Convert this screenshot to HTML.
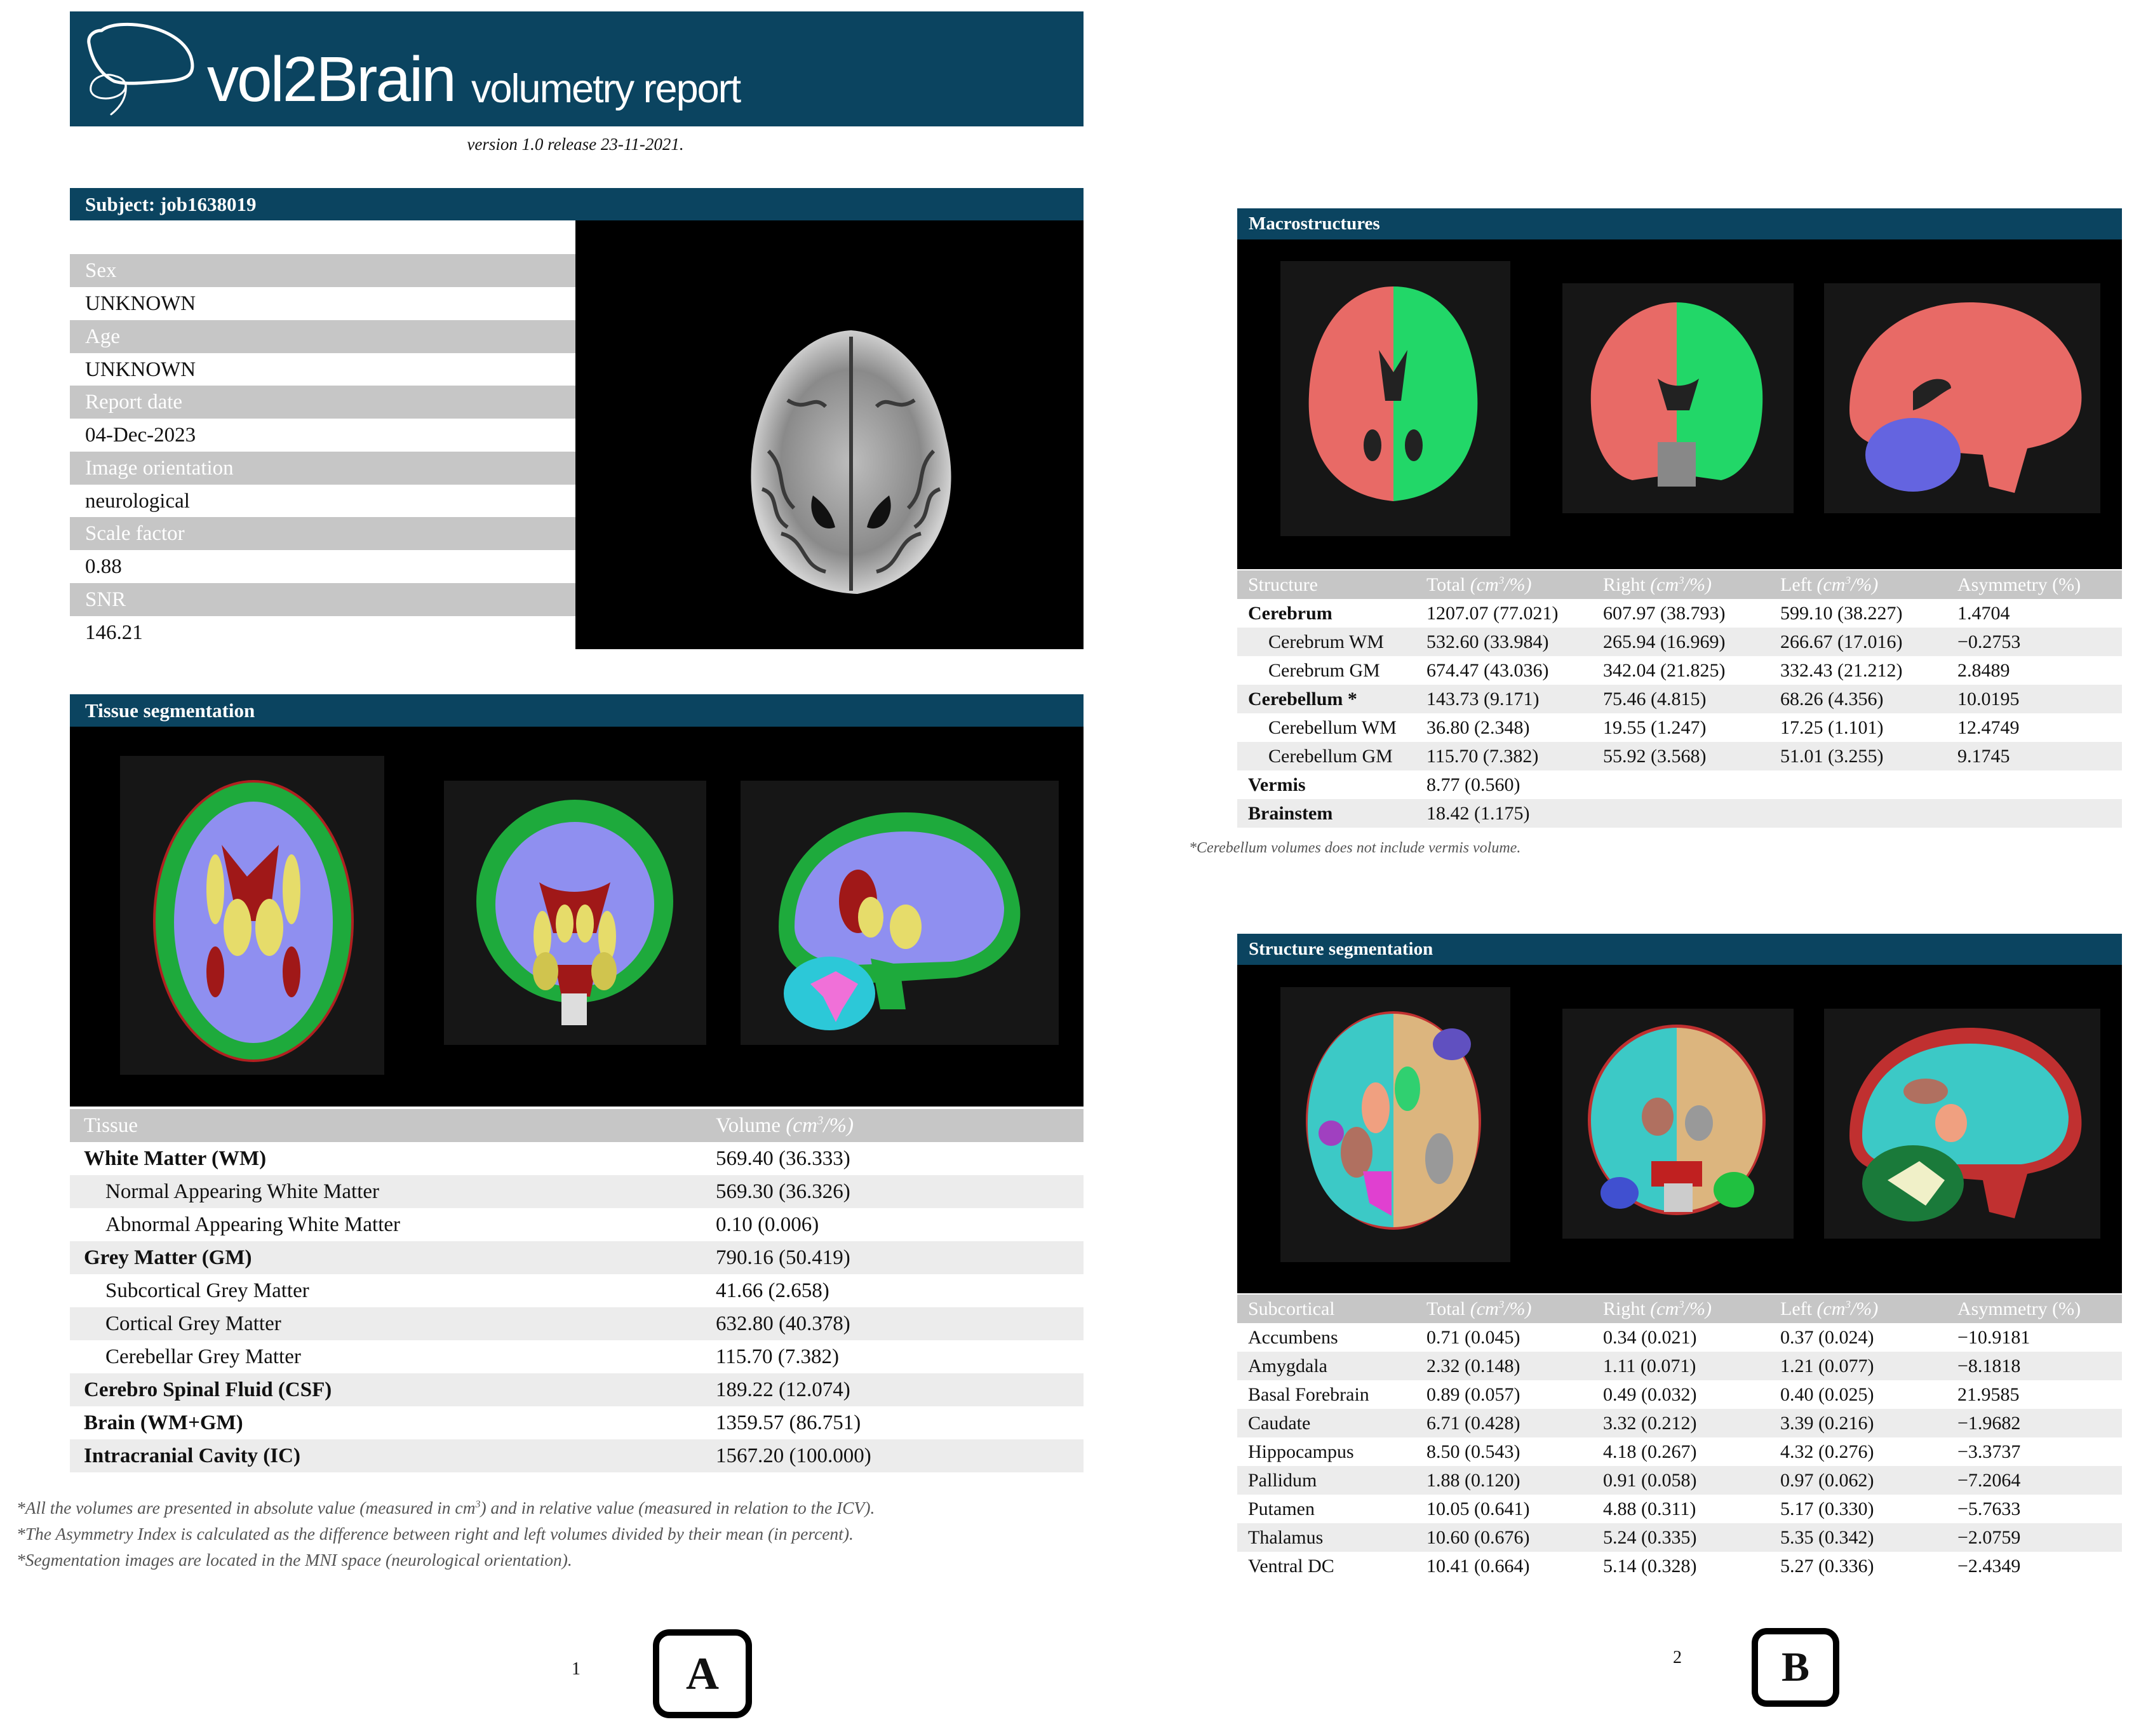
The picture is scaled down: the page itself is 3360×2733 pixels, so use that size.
<!DOCTYPE html>
<html><head><meta charset="utf-8">
<style>
*{margin:0;padding:0;box-sizing:border-box}
body{width:3360px;height:2733px;background:#fff;position:relative;overflow:hidden;font-family:"Liberation Serif",serif;color:#111}
.a{position:absolute}
.bar{position:absolute;background:#0b4460;color:#fff;font-weight:bold;font-size:31px;padding-left:24px;display:flex;align-items:center}
.blk{position:absolute;background:#000}
.pnl{position:absolute;background:#161616}
.row{position:absolute;height:52px;font-size:33px;display:flex;align-items:center}
.g{background:#ececec}
.h{background:#c6c6c6;color:#fff}
.c{position:absolute}
.r2{position:absolute;height:45px;font-size:30px;display:flex;align-items:center;left:1948px;width:1393px}
.r2 span{position:absolute}
</style></head><body>

<div class="a" style="left:110px;top:18px;width:1596px;height:181px;background:#0b4460"></div>
<svg class="a" style="left:110px;top:18px" width="300" height="181" viewBox="0 0 300 181">
<g fill="none" stroke="#fff" stroke-linecap="round">
<path d="M50 30 C 75 10, 170 20, 190 70 C 200 100, 185 108, 150 110 C 120 112, 90 116, 70 110 C 50 100, 35 80, 30 50 C 28 38, 38 30, 50 30" stroke-width="5"/>
<path d="M72 102 C 55 95, 30 105, 33 125 C 38 142, 75 140, 85 125 C 92 115, 85 105, 72 102" stroke-width="3"/>
<path d="M88 115 C 90 135, 80 150, 65 162" stroke-width="3"/>
</g></svg>
<div class="a" style="left:326px;top:68px;font-family:'Liberation Sans',sans-serif;font-size:100px;color:#fff;letter-spacing:-3px">vol2Brain</div>
<div class="a" style="left:742px;top:104px;font-family:'Liberation Sans',sans-serif;font-size:63px;color:#fff;letter-spacing:-2px">volumetry report</div>
<div class="a" style="left:0;width:1812px;top:212px;text-align:center;font-style:italic;font-size:27px">version 1.0 release 23-11-2021.</div>

<div class="bar" style="left:110px;top:296px;width:1596px;height:51px">Subject: job1638019</div>
<div class="row h" style="left:110px;top:400px;width:796px;padding-left:24px">Sex</div>
<div class="row" style="left:110px;top:452px;width:796px;padding-left:24px">UNKNOWN</div>
<div class="row h" style="left:110px;top:504px;width:796px;padding-left:24px">Age</div>
<div class="row" style="left:110px;top:556px;width:796px;padding-left:24px">UNKNOWN</div>
<div class="row h" style="left:110px;top:607px;width:796px;padding-left:24px">Report date</div>
<div class="row" style="left:110px;top:659px;width:796px;padding-left:24px">04-Dec-2023</div>
<div class="row h" style="left:110px;top:711px;width:796px;padding-left:24px">Image orientation</div>
<div class="row" style="left:110px;top:763px;width:796px;padding-left:24px">neurological</div>
<div class="row h" style="left:110px;top:814px;width:796px;padding-left:24px">Scale factor</div>
<div class="row" style="left:110px;top:866px;width:796px;padding-left:24px">0.88</div>
<div class="row h" style="left:110px;top:918px;width:796px;padding-left:24px">SNR</div>
<div class="row" style="left:110px;top:970px;width:796px;padding-left:24px">146.21</div>
<div class="blk" style="left:906px;top:347px;width:800px;height:675px"></div>
<svg class="a" style="left:1150px;top:510px" width="380" height="440" viewBox="0 0 380 440">
<defs><radialGradient id="gb" cx="50%" cy="50%" r="50%"><stop offset="0" stop-color="#bdbdbd"/><stop offset="0.7" stop-color="#8a8a8a"/><stop offset="1" stop-color="#d0d0d0"/></radialGradient></defs>
<path d="M190 10 C 260 15, 320 80, 340 180 C 365 280, 330 400, 200 425 C 70 420, 20 320, 35 200 C 50 90, 110 15, 190 10Z" fill="url(#gb)"/>
<g stroke="#3a3a3a" stroke-width="6" fill="none">
<path d="M190 20 L190 420"/><path d="M60 200 C 90 230, 70 260, 100 290"/><path d="M320 200 C 290 230, 310 260, 280 290"/>
<path d="M80 330 C 120 340, 110 380, 150 390"/><path d="M300 330 C 260 340, 270 380, 230 390"/>
<path d="M90 120 C 120 140, 130 110, 150 130"/><path d="M290 120 C 260 140, 250 110, 230 130"/>
<path d="M50 260 C 80 270, 60 300, 90 320"/><path d="M330 260 C 300 270, 320 300, 290 320"/>
</g>
<path d="M130 270 C 120 300, 140 330, 165 320 C 160 300, 150 285, 130 270Z M250 270 C 260 300, 240 330, 215 320 C 220 300, 230 285, 250 270Z" fill="#111"/>
</svg>

<div class="bar" style="left:110px;top:1093px;width:1596px;height:51px">Tissue segmentation</div>
<div class="blk" style="left:110px;top:1144px;width:1596px;height:598px"></div>
<div class="pnl" style="left:189px;top:1190px;width:416px;height:502px"></div>
<div class="pnl" style="left:699px;top:1229px;width:413px;height:416px"></div>
<div class="pnl" style="left:1166px;top:1229px;width:501px;height:416px"></div>
<svg class="a" style="left:189px;top:1190px" width="416" height="502">
<ellipse cx="210" cy="260" rx="158" ry="222" fill="#b02020"/>
<ellipse cx="210" cy="260" rx="154" ry="218" fill="#1eaa3c"/>
<ellipse cx="210" cy="262" rx="125" ry="190" fill="#8f8ff0"/>
<path d="M160 140 L200 190 L250 140 L235 260 L185 260Z" fill="#a01818"/>
<ellipse cx="150" cy="210" rx="14" ry="55" fill="#e6dc6a"/><ellipse cx="270" cy="210" rx="14" ry="55" fill="#e6dc6a"/>
<ellipse cx="185" cy="270" rx="22" ry="45" fill="#e6dc6a"/><ellipse cx="235" cy="270" rx="22" ry="45" fill="#e6dc6a"/>
<ellipse cx="150" cy="340" rx="14" ry="40" fill="#a01818"/><ellipse cx="270" cy="340" rx="14" ry="40" fill="#a01818"/>
</svg>
<svg class="a" style="left:699px;top:1229px" width="413" height="416">
<ellipse cx="206" cy="190" rx="155" ry="160" fill="#1eaa3c"/>
<ellipse cx="206" cy="195" rx="125" ry="130" fill="#8f8ff0"/>
<path d="M150 160 C 180 180, 230 180, 262 160 L240 240 L172 240Z" fill="#a01818"/>
<ellipse cx="155" cy="245" rx="14" ry="40" fill="#e6dc6a"/><ellipse cx="257" cy="245" rx="14" ry="40" fill="#e6dc6a"/>
<ellipse cx="190" cy="225" rx="14" ry="30" fill="#e6dc6a"/><ellipse cx="222" cy="225" rx="14" ry="30" fill="#e6dc6a"/>
<path d="M175 290 L240 290 L230 340 L185 340Z" fill="#a01818"/>
<ellipse cx="160" cy="300" rx="20" ry="30" fill="#d0c44e"/><ellipse cx="252" cy="300" rx="20" ry="30" fill="#d0c44e"/>
<rect x="185" y="335" width="40" height="50" fill="#ddd"/>
</svg>
<svg class="a" style="left:1166px;top:1229px" width="501" height="416">
<path d="M60 230 C 60 120, 150 50, 260 50 C 370 50, 430 120, 440 200 C 445 260, 400 300, 340 310 L 180 320 C 120 320, 60 300, 60 230Z" fill="#1eaa3c"/>
<path d="M85 230 C 85 135, 160 80, 260 80 C 360 80, 410 140, 415 200 C 415 250, 380 280, 330 285 L 180 290 C 130 290, 85 270, 85 230Z" fill="#8f8ff0"/>
<ellipse cx="185" cy="190" rx="30" ry="50" fill="#a01818"/>
<ellipse cx="205" cy="215" rx="20" ry="32" fill="#e6dc6a"/><ellipse cx="260" cy="230" rx="25" ry="35" fill="#e6dc6a"/>
<ellipse cx="140" cy="335" rx="72" ry="58" fill="#2cc8d8"/>
<path d="M110 320 L150 300 L185 320 L160 360 L150 380 L130 340Z" fill="#f070d8"/>
<path d="M205 280 L250 290 L260 360 L220 360Z" fill="#1eaa3c"/>
</svg>

<div class="row h" style="left:110px;top:1746px;width:1596px"><span class="c" style="left:22px">Tissue</span><span class="c" style="left:1017px">Volume <i>(cm<sup style="font-size:19px">3</sup>/%)</i></span></div>
<div class="row" style="left:110px;top:1798px;width:1596px;font-weight:bold"><span class="c" style="left:22px">White Matter (WM)</span><span class="c" style="left:1017px;font-weight:normal">569.40 (36.333)</span></div>
<div class="row g" style="left:110px;top:1850px;width:1596px"><span class="c" style="left:56px">Normal Appearing White Matter</span><span class="c" style="left:1017px">569.30 (36.326)</span></div>
<div class="row" style="left:110px;top:1902px;width:1596px"><span class="c" style="left:56px">Abnormal Appearing White Matter</span><span class="c" style="left:1017px">0.10 (0.006)</span></div>
<div class="row g" style="left:110px;top:1954px;width:1596px;font-weight:bold"><span class="c" style="left:22px">Grey Matter (GM)</span><span class="c" style="left:1017px;font-weight:normal">790.16 (50.419)</span></div>
<div class="row" style="left:110px;top:2006px;width:1596px"><span class="c" style="left:56px">Subcortical Grey Matter</span><span class="c" style="left:1017px">41.66 (2.658)</span></div>
<div class="row g" style="left:110px;top:2058px;width:1596px"><span class="c" style="left:56px">Cortical Grey Matter</span><span class="c" style="left:1017px">632.80 (40.378)</span></div>
<div class="row" style="left:110px;top:2110px;width:1596px"><span class="c" style="left:56px">Cerebellar Grey Matter</span><span class="c" style="left:1017px">115.70 (7.382)</span></div>
<div class="row g" style="left:110px;top:2162px;width:1596px;font-weight:bold"><span class="c" style="left:22px">Cerebro Spinal Fluid (CSF)</span><span class="c" style="left:1017px;font-weight:normal">189.22 (12.074)</span></div>
<div class="row" style="left:110px;top:2214px;width:1596px;font-weight:bold"><span class="c" style="left:22px">Brain (WM+GM)</span><span class="c" style="left:1017px;font-weight:normal">1359.57 (86.751)</span></div>
<div class="row g" style="left:110px;top:2266px;width:1596px;font-weight:bold"><span class="c" style="left:22px">Intracranial Cavity (IC)</span><span class="c" style="left:1017px;font-weight:normal">1567.20 (100.000)</span></div>

<div class="a" style="left:26px;top:2348px;font-style:italic;font-size:27.5px;color:#555;line-height:41px">*All the volumes are presented in absolute value (measured in cm<sup style="font-size:16px">3</sup>) and in relative value (measured in relation to the ICV).<br>*The Asymmetry Index is calculated as the difference between right and left volumes divided by their mean (in percent).<br>*Segmentation images are located in the MNI space (neurological orientation).</div>

<div class="a" style="left:900px;top:2612px;font-size:28px">1</div>
<div class="a" style="left:1028px;top:2565px;width:156px;height:140px;border:10px solid #000;border-radius:26px;display:flex;align-items:center;justify-content:center;font-size:72px;font-weight:bold">A</div>

<div class="bar" style="left:1948px;top:328px;width:1393px;height:49px;font-size:29px;padding-left:18px">Macrostructures</div>
<div class="blk" style="left:1948px;top:377px;width:1393px;height:519px"></div>
<div class="pnl" style="left:2016px;top:411px;width:362px;height:433px"></div>
<div class="pnl" style="left:2460px;top:446px;width:364px;height:362px"></div>
<div class="pnl" style="left:2872px;top:446px;width:435px;height:362px"></div>
<svg class="a" style="left:2016px;top:411px" width="362" height="433">
<path d="M178 40 C 110 40, 50 100, 45 210 C 40 310, 90 370, 178 378Z" fill="#e86a66"/>
<path d="M178 40 C 250 40, 305 100, 310 210 C 315 310, 265 370, 178 378Z" fill="#22d768"/>
<path d="M155 140 L178 175 L200 140 L190 220 L165 220Z" fill="#222"/>
<ellipse cx="145" cy="290" rx="14" ry="25" fill="#222"/><ellipse cx="210" cy="290" rx="14" ry="25" fill="#222"/>
</svg>
<svg class="a" style="left:2460px;top:446px" width="364" height="362">
<path d="M180 30 C 120 30, 50 80, 45 170 C 42 250, 70 300, 110 310 L180 300Z" fill="#e86a66"/>
<path d="M180 30 C 240 30, 310 80, 315 170 C 318 250, 290 300, 250 310 L180 300Z" fill="#22d768"/>
<path d="M150 150 C 170 165, 195 165, 215 150 L200 200 L165 200Z" fill="#222"/>
<rect x="150" y="250" width="60" height="70" fill="#888"/>
</svg>
<svg class="a" style="left:2872px;top:446px" width="435" height="362">
<path d="M40 200 C 40 100, 120 30, 230 30 C 340 30, 400 100, 405 170 C 410 230, 370 250, 320 260 L 300 330 L 260 320 L 250 270 L 120 260 C 70 260, 40 240, 40 200Z" fill="#e86a66"/>
<ellipse cx="140" cy="270" rx="75" ry="58" fill="#6464e0"/>
<path d="M140 170 C 170 140, 200 150, 200 165 C 180 175, 160 195, 140 200Z" fill="#222"/>
</svg>

<div class="r2 h" style="top:898px"><span style="left:17px">Structure</span><span style="left:298px">Total <i>(cm<sup style="font-size:17px">3</sup>/%)</i></span><span style="left:576px">Right <i>(cm<sup style="font-size:17px">3</sup>/%)</i></span><span style="left:855px">Left <i>(cm<sup style="font-size:17px">3</sup>/%)</i></span><span style="left:1134px">Asymmetry (%)</span></div>
<div class="r2" style="top:943px"><span style="left:17px;font-weight:bold">Cerebrum</span><span style="left:298px">1207.07 (77.021)</span><span style="left:576px">607.97 (38.793)</span><span style="left:855px">599.10 (38.227)</span><span style="left:1134px">1.4704</span></div>
<div class="r2 g" style="top:988px"><span style="left:49px">Cerebrum WM</span><span style="left:298px">532.60 (33.984)</span><span style="left:576px">265.94 (16.969)</span><span style="left:855px">266.67 (17.016)</span><span style="left:1134px">−0.2753</span></div>
<div class="r2" style="top:1033px"><span style="left:49px">Cerebrum GM</span><span style="left:298px">674.47 (43.036)</span><span style="left:576px">342.04 (21.825)</span><span style="left:855px">332.43 (21.212)</span><span style="left:1134px">2.8489</span></div>
<div class="r2 g" style="top:1078px"><span style="left:17px;font-weight:bold">Cerebellum *</span><span style="left:298px">143.73 (9.171)</span><span style="left:576px">75.46 (4.815)</span><span style="left:855px">68.26 (4.356)</span><span style="left:1134px">10.0195</span></div>
<div class="r2" style="top:1123px"><span style="left:49px">Cerebellum WM</span><span style="left:298px">36.80 (2.348)</span><span style="left:576px">19.55 (1.247)</span><span style="left:855px">17.25 (1.101)</span><span style="left:1134px">12.4749</span></div>
<div class="r2 g" style="top:1168px"><span style="left:49px">Cerebellum GM</span><span style="left:298px">115.70 (7.382)</span><span style="left:576px">55.92 (3.568)</span><span style="left:855px">51.01 (3.255)</span><span style="left:1134px">9.1745</span></div>
<div class="r2" style="top:1213px"><span style="left:17px;font-weight:bold">Vermis</span><span style="left:298px">8.77 (0.560)</span></div>
<div class="r2 g" style="top:1258px"><span style="left:17px;font-weight:bold">Brainstem</span><span style="left:298px">18.42 (1.175)</span></div>
<div class="a" style="left:1872px;top:1322px;font-style:italic;font-size:24px;color:#555">*Cerebellum volumes does not include vermis volume.</div>

<div class="bar" style="left:1948px;top:1470px;width:1393px;height:49px;font-size:29px;padding-left:18px">Structure segmentation</div>
<div class="blk" style="left:1948px;top:1519px;width:1393px;height:517px"></div>
<div class="pnl" style="left:2016px;top:1554px;width:362px;height:433px"></div>
<div class="pnl" style="left:2460px;top:1588px;width:364px;height:362px"></div>
<div class="pnl" style="left:2872px;top:1588px;width:435px;height:362px"></div>
<svg class="a" style="left:2016px;top:1554px" width="362" height="433">
<ellipse cx="178" cy="210" rx="138" ry="172" fill="#c03030"/>
<path d="M178 42 C 110 42, 45 100, 43 210 C 41 310, 90 375, 178 378Z" fill="#3cc9c6"/>
<path d="M178 42 C 245 42, 310 100, 312 210 C 314 310, 265 375, 178 378Z" fill="#dcb57e"/>
<ellipse cx="120" cy="260" rx="25" ry="40" fill="#b07060"/><ellipse cx="150" cy="190" rx="22" ry="40" fill="#f0a080"/>
<ellipse cx="200" cy="160" rx="20" ry="35" fill="#30d070"/><ellipse cx="250" cy="270" rx="22" ry="40" fill="#999"/>
<path d="M130 290 L175 290 L175 360 L140 340Z" fill="#e040d0"/>
<ellipse cx="270" cy="90" rx="30" ry="25" fill="#6050c0"/><ellipse cx="80" cy="230" rx="20" ry="20" fill="#a040c0"/>
</svg>
<svg class="a" style="left:2460px;top:1588px" width="364" height="362">
<ellipse cx="180" cy="175" rx="140" ry="150" fill="#c03030"/>
<path d="M180 30 C 110 30, 45 90, 45 175 C 45 260, 100 315, 180 320Z" fill="#3cc9c6"/>
<path d="M180 30 C 250 30, 315 90, 315 175 C 315 260, 260 315, 180 320Z" fill="#dcb57e"/>
<ellipse cx="150" cy="170" rx="25" ry="30" fill="#b07060"/><ellipse cx="215" cy="180" rx="22" ry="28" fill="#999"/>
<rect x="140" y="240" width="80" height="40" fill="#c02020"/>
<ellipse cx="90" cy="290" rx="30" ry="25" fill="#4050d0"/><ellipse cx="270" cy="285" rx="32" ry="28" fill="#20c040"/>
<rect x="160" y="275" width="45" height="45" fill="#ccc"/>
</svg>
<svg class="a" style="left:2872px;top:1588px" width="435" height="362">
<path d="M40 200 C 40 100, 120 30, 230 30 C 340 30, 400 100, 405 170 C 410 230, 370 250, 320 260 L 300 330 L 260 320 L 250 270 L 120 260 C 70 260, 40 240, 40 200Z" fill="#c03030"/>
<path d="M60 200 C 60 110, 130 55, 230 55 C 330 55, 380 110, 385 170 C 385 220, 350 240, 310 245 L 120 245 C 80 245, 60 230, 60 200Z" fill="#3cc9c6"/>
<ellipse cx="160" cy="130" rx="35" ry="20" fill="#b07060"/><ellipse cx="200" cy="180" rx="25" ry="30" fill="#f0a080"/>
<ellipse cx="140" cy="275" rx="80" ry="60" fill="#1a7a3a"/>
<path d="M100 270 L150 240 L190 270 L160 310Z" fill="#f0f0c8"/>
</svg>

<div class="r2 h" style="top:2038px"><span style="left:17px">Subcortical</span><span style="left:298px">Total <i>(cm<sup style="font-size:17px">3</sup>/%)</i></span><span style="left:576px">Right <i>(cm<sup style="font-size:17px">3</sup>/%)</i></span><span style="left:855px">Left <i>(cm<sup style="font-size:17px">3</sup>/%)</i></span><span style="left:1134px">Asymmetry (%)</span></div>
<div class="r2" style="top:2083px"><span style="left:17px">Accumbens</span><span style="left:298px">0.71 (0.045)</span><span style="left:576px">0.34 (0.021)</span><span style="left:855px">0.37 (0.024)</span><span style="left:1134px">−10.9181</span></div>
<div class="r2 g" style="top:2128px"><span style="left:17px">Amygdala</span><span style="left:298px">2.32 (0.148)</span><span style="left:576px">1.11 (0.071)</span><span style="left:855px">1.21 (0.077)</span><span style="left:1134px">−8.1818</span></div>
<div class="r2" style="top:2173px"><span style="left:17px">Basal Forebrain</span><span style="left:298px">0.89 (0.057)</span><span style="left:576px">0.49 (0.032)</span><span style="left:855px">0.40 (0.025)</span><span style="left:1134px">21.9585</span></div>
<div class="r2 g" style="top:2218px"><span style="left:17px">Caudate</span><span style="left:298px">6.71 (0.428)</span><span style="left:576px">3.32 (0.212)</span><span style="left:855px">3.39 (0.216)</span><span style="left:1134px">−1.9682</span></div>
<div class="r2" style="top:2263px"><span style="left:17px">Hippocampus</span><span style="left:298px">8.50 (0.543)</span><span style="left:576px">4.18 (0.267)</span><span style="left:855px">4.32 (0.276)</span><span style="left:1134px">−3.3737</span></div>
<div class="r2 g" style="top:2308px"><span style="left:17px">Pallidum</span><span style="left:298px">1.88 (0.120)</span><span style="left:576px">0.91 (0.058)</span><span style="left:855px">0.97 (0.062)</span><span style="left:1134px">−7.2064</span></div>
<div class="r2" style="top:2353px"><span style="left:17px">Putamen</span><span style="left:298px">10.05 (0.641)</span><span style="left:576px">4.88 (0.311)</span><span style="left:855px">5.17 (0.330)</span><span style="left:1134px">−5.7633</span></div>
<div class="r2 g" style="top:2398px"><span style="left:17px">Thalamus</span><span style="left:298px">10.60 (0.676)</span><span style="left:576px">5.24 (0.335)</span><span style="left:855px">5.35 (0.342)</span><span style="left:1134px">−2.0759</span></div>
<div class="r2" style="top:2443px"><span style="left:17px">Ventral DC</span><span style="left:298px">10.41 (0.664)</span><span style="left:576px">5.14 (0.328)</span><span style="left:855px">5.27 (0.336)</span><span style="left:1134px">−2.4349</span></div>

<div class="a" style="left:2634px;top:2594px;font-size:28px">2</div>
<div class="a" style="left:2758px;top:2563px;width:138px;height:124px;border:10px solid #000;border-radius:24px;display:flex;align-items:center;justify-content:center;font-size:66px;font-weight:bold">B</div>
</body></html>
